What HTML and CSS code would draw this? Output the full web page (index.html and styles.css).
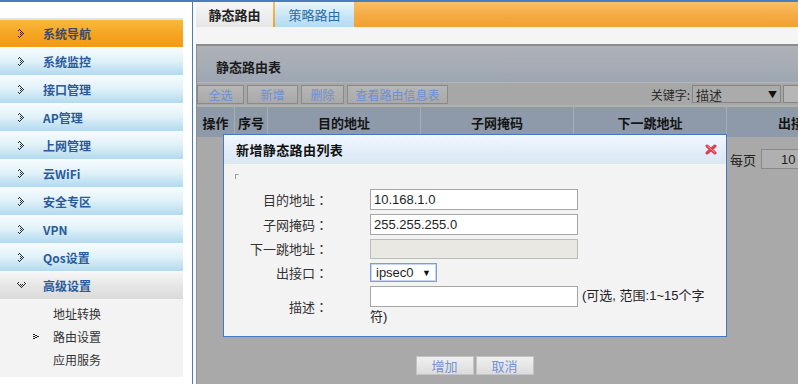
FILE: index.html
```html
<!DOCTYPE html>
<html>
<head>
<meta charset="utf-8">
<link rel="stylesheet" href="styles.css">
</head>
<body>
<svg class="defs" width="0" height="0" aria-hidden="true">
  <defs>
    <g id="chev">
      <rect x="1" y="0" width="1" height="1"/>
      <rect x="0" y="1" width="1" height="1"/><rect x="2" y="1" width="1" height="1"/>
      <rect x="3" y="2" width="1" height="1"/>
      <rect x="2" y="3" width="1" height="1"/><rect x="4" y="3" width="1" height="1"/>
      <rect x="5" y="4" width="1" height="1"/><rect x="3" y="4" width="1" height="1"/>
      <rect x="2" y="5" width="1" height="1"/><rect x="4" y="5" width="1" height="1"/>
      <rect x="3" y="6" width="1" height="1"/>
      <rect x="0" y="7" width="1" height="1"/><rect x="2" y="7" width="1" height="1"/>
      <rect x="1" y="8" width="1" height="1"/>
    </g>
  </defs>
</svg>
<div class="page">
  <aside class="sidebar">
    <ul class="menu">
      <li class="item active"><svg class="ico" width="7" height="9" viewBox="0 0 7 9"><use href="#chev" fill="#3a1c06"/></svg>系统导航</li>
      <li class="item"><svg class="ico" width="7" height="9" viewBox="0 0 7 9"><use href="#chev" fill="#2a2a2a"/></svg>系统监控</li>
      <li class="item"><svg class="ico" width="7" height="9" viewBox="0 0 7 9"><use href="#chev" fill="#2a2a2a"/></svg>接口管理</li>
      <li class="item"><svg class="ico" width="7" height="9" viewBox="0 0 7 9"><use href="#chev" fill="#2a2a2a"/></svg>AP管理</li>
      <li class="item"><svg class="ico" width="7" height="9" viewBox="0 0 7 9"><use href="#chev" fill="#2a2a2a"/></svg>上网管理</li>
      <li class="item"><svg class="ico" width="7" height="9" viewBox="0 0 7 9"><use href="#chev" fill="#2a2a2a"/></svg>云WiFi</li>
      <li class="item"><svg class="ico" width="7" height="9" viewBox="0 0 7 9"><use href="#chev" fill="#2a2a2a"/></svg>安全专区</li>
      <li class="item"><svg class="ico" width="7" height="9" viewBox="0 0 7 9"><use href="#chev" fill="#2a2a2a"/></svg>VPN</li>
      <li class="item"><svg class="ico" width="7" height="9" viewBox="0 0 7 9"><use href="#chev" fill="#2a2a2a"/></svg>Qos设置</li>
      <li class="item open"><svg class="ico down" width="9" height="7" viewBox="0 0 9 7"><g transform="translate(9 0) rotate(90)"><use href="#chev" fill="#2a2a2a"/></g></svg>高级设置</li>
    </ul>
    <ul class="sub">
      <li><span class="mk"></span>地址转换</li>
      <li><span class="mk"><svg width="6" height="5" viewBox="0 0 6 5"><g fill="#222"><rect x="0" y="0" width="2" height="1"/><rect x="2" y="1" width="2" height="1"/><rect x="4" y="2" width="2" height="1"/><rect x="2" y="3" width="2" height="1"/><rect x="0" y="4" width="2" height="1"/><rect x="0" y="2" width="2" height="1"/></g></svg></span>路由设置</li>
      <li><span class="mk"></span>应用服务</li>
    </ul>
  </aside>

  <main class="main">
    <div class="tabs">
      <div class="tab tab-on">静态路由</div>
      <div class="tab tab-off">策略路由</div>
    </div>
    <div class="strip"></div>
    <section class="panel">
      <div class="panel-title">静态路由表</div>
      <div class="toolbar">
        <span class="tbtn w46">全选</span>
        <span class="tbtn w50">新增</span>
        <span class="tbtn w42">删除</span>
        <span class="tbtn w100">查看路由信息表</span>
        <span class="kw">关键字:</span>
        <span class="kwsel">描述<span class="arr">▼</span></span>
        <span class="kwinput"></span>
      </div>
      <div class="thead">
        <div class="th c1">操作</div>
        <div class="th c2">序号</div>
        <div class="th c3">目的地址</div>
        <div class="th c3">子网掩码</div>
        <div class="th c3">下一跳地址</div>
        <div class="th c4">出接</div>
      </div>
      <div class="pager"><span class="ptxt">每页</span><span class="pbox">10</span></div>
    </section>

    <div class="dialog-layer">
      <div class="modal">
        <div class="modal-head">
          <span class="modal-title">新增静态路由列表</span>
          <svg class="close" width="12" height="11" viewBox="0 0 12 11"><g stroke="#e23c4e" stroke-width="3" stroke-linecap="round"><line x1="2" y1="2" x2="10" y2="9"/><line x1="10" y1="2" x2="2" y2="9"/></g><g stroke="#f7a0aa" stroke-width="1"><line x1="2.5" y1="2" x2="9.5" y2="8.2"/></g></svg>
        </div>
        <div class="modal-body">
          <svg class="broken" width="4" height="5" viewBox="0 0 4 5"><path d="M0.5 5V0.5H3.5" fill="none" stroke="#999" stroke-width="1"/></svg>
          <div class="form">
            <div class="lbl">目的地址<span class="colon">：</span></div>
            <div class="val"><span class="inp">10.168.1.0</span></div>
            <div class="lbl">子网掩码<span class="colon">：</span></div>
            <div class="val"><span class="inp">255.255.255.0</span></div>
            <div class="lbl">下一跳地址<span class="colon">：</span></div>
            <div class="val"><span class="inp dis"></span></div>
            <div class="lbl">出接口<span class="colon">：</span></div>
            <div class="val"><span class="sel">ipsec0<span class="arr">▼</span></span></div>
            <div class="lbl">描述<span class="colon">：</span></div>
            <div class="val desc"><span class="inp"></span><span class="hint">(可选, 范围:1~15个字符)</span></div>
          </div>
        </div>
      </div>
      <div class="actions">
        <span class="abtn">增加</span>
        <span class="abtn">取消</span>
      </div>
    </div>
  </main>
</div>
</body>
</html>
```

FILE: styles.css
```css
* { box-sizing: border-box; }
html, body {
  margin: 0;
  padding: 0;
}
body {
  width: 798px;
  height: 384px;
  overflow: hidden;
  font-family: "Liberation Sans", "Noto Sans CJK SC", sans-serif;
  font-size: 12px;
  color: #222;
  background: #fff;
}
.defs { position: absolute; width: 0; height: 0; }
.page {
  display: flex;
  height: 384px;
  border-top: 2px solid #4a7cc0;
}

/* sidebar */
.sidebar {
  flex: none;
  width: 193px;
  border-right: 1px solid #4a7cc0;
  background: #fff;
  padding-top: 16px;
  display: flex;
  flex-direction: column;
}
.menu {
  list-style: none;
  margin: 0;
  padding: 0;
  width: 183px;
  border-top: 2px solid #dbe5ec;
}
.item {
  height: 28px;
  border-bottom: 1px solid #fbfdfe;
  display: flex;
  align-items: center;
  padding-left: 18px;
  background: linear-gradient(#f6fbfd, #e2f2f9 45%, #b2daee);
  color: #2a5a9b;
  font-weight: bold;
  font-size: 12px;
  font-family: "Noto Sans CJK SC", "Liberation Sans", sans-serif;
}
.item .ico { margin-right: 18px; flex: none; }
.item .ico.down { margin-left: -1px; margin-right: 17px; }
.item.active {
  background: linear-gradient(#f8b93c, #f5a524 50%, #f39a14);
  color: #3b4a66;
}
.item.open {
  background: linear-gradient(#f7f7f7, #e6e6e6 50%, #dadada);
  border-bottom: 1px solid #f4f4f4;
}
.sub {
  list-style: none;
  margin: 0;
  padding: 2px 0 0;
  width: 183px;
  height: 77px;
  background: #f3f3f3;
}
.sub li {
  height: 23px;
  display: flex;
  align-items: center;
  padding-left: 33px;
  color: #333;
  font-size: 12px;
  font-family: "Noto Sans CJK SC", sans-serif;
}
.sub .mk {
  width: 20px;
  flex: none;
  display: flex;
  align-items: center;
}

/* main */
.main {
  flex: 1;
  min-width: 0;
  position: relative;
  overflow: hidden;
  padding-left: 3px;
  background: #fafafa;
  display: flex;
  flex-direction: column;
}
.tabs {
  flex: none;
  height: 25px;
  display: flex;
  background: linear-gradient(#f9bf66, #f5ab44 50%, #f2a132);
}
.tab {
  height: 25px;
  display: flex;
  align-items: center;
  justify-content: center;
  font-size: 13px;
  font-family: "Noto Sans CJK SC", sans-serif;
}
.tab-on {
  width: 77px;
  background: linear-gradient(#f6f6f6, #e6e6e6);
  font-weight: bold;
  color: #222;
}
.tab-off {
  width: 79px;
  margin-left: 2px;
  background: linear-gradient(#eaf6fc, #c4e4f4 60%, #b4dcf0);
  color: #2c6ca6;
}
.strip {
  flex: none;
  height: 17px;
  background: #f5f5f5;
}
.panel {
  flex: 1;
  background: #a9a9a9;
  border-left: 1px solid #8e8e8e;
  border-top: 2px solid #8c8c8c;
  display: flex;
  flex-direction: column;
}
.panel-title {
  height: 37px;
  padding-left: 19px;
  display: flex;
  align-items: center;
  padding-top: 5px;
  background: linear-gradient(#aeb2b8, #a7adb5 50%, #9ca6b2);
  font-size: 13px;
  font-weight: bold;
  color: #1c1c1c;
  font-family: "Noto Sans CJK SC", sans-serif;
  border-bottom: 1px solid #b4b6b9;
}
.toolbar {
  height: 24px;
  display: flex;
  align-items: center;
  background: #a7a7a7;
  font-family: "Noto Sans CJK SC", sans-serif;
  border-bottom: 2px solid #b0b0b0;
}
.tbtn {
  height: 19px;
  margin-right: 3px;
  border: 1px solid #8a8a8a;
  background: linear-gradient(#b6b6b6, #a9a9a9);
  color: #6d8fd6;
  font-size: 12px;
  display: flex;
  align-items: center;
  justify-content: center;
}
.w46 { width: 47px; }
.w50 { width: 51px; }
.w42 { width: 43px; }
.w100 { width: 101px; }
.kw {
  margin-left: auto;
  margin-right: 2px;
  color: #2a2a2a;
  font-size: 12px;
}
.kwsel {
  width: 89px;
  height: 18px;
  border: 1px solid #858585;
  background: #ababab;
  color: #2a2a2a;
  font-size: 13px;
  padding-left: 3px;
  display: flex;
  align-items: center;
}
.kwsel .arr {
  margin-left: auto;
  margin-right: 3px;
  font-size: 9px;
  color: #111;
}
.kwinput {
  width: 15px;
  height: 18px;
  margin-left: 2px;
  border: 1px solid #858585;
  border-right: none;
  background: #b6b6b6;
}
.thead {
  display: flex;
  height: 30px;
  background: #8e9aa9;
}
.th {
  flex: none;
  display: flex;
  align-items: center;
  justify-content: center;
  font-size: 13px;
  font-weight: bold;
  color: #141414;
  font-family: "Noto Sans CJK SC", sans-serif;
  border-left: 1px solid #a3adb9;
  white-space: nowrap;
}
.c1 { width: 37px; border-left: none; }
.c2 { width: 33px; }
.c3 { width: 153px; }
.c4 { flex: 1; justify-content: flex-start; padding-left: 51px; }
.pager {
  display: flex;
  align-items: center;
  height: 20px;
  margin-top: 12px;
  padding-left: 533px;
  font-size: 13px;
  color: #222;
  white-space: nowrap;
  font-family: "Noto Sans CJK SC", sans-serif;
}
.ptxt { flex: none; }
.pbox {
  margin-left: 5px;
  width: 60px;
  height: 20px;
  flex: none;
  border: 1px solid #8a8a8a;
  background: #b0b0b0;
  display: flex;
  align-items: center;
  padding-left: 19px;
  font-family: "Liberation Sans", sans-serif;
  font-size: 13px;
}

/* dialog */
.dialog-layer {
  position: absolute;
  left: 30px;
  top: 132px;
  width: 504px;
}
.modal {
  width: 504px;
  height: 203px;
  border: 1px solid #4677c4;
  background: #f3f3f3;
  display: flex;
  flex-direction: column;
}
.modal-head {
  height: 29px;
  flex: none;
  display: flex;
  align-items: center;
  padding-left: 12px;
  padding-right: 9px;
  background: linear-gradient(#f2f7fd, #e4eef9 50%, #dbe7f5);
}
.modal-title {
  font-size: 13px;
  font-weight: bold;
  color: #111;
  letter-spacing: 0.4px;
  font-family: "Noto Sans CJK SC", sans-serif;
}
.close { margin-left: auto; }
.modal-body {
  flex: 1;
  padding: 10px 0 0 11px;
  font-family: "Liberation Sans", "Noto Sans CJK SC", sans-serif;
}
.broken { display: block; }
.form {
  margin-top: 10px;
  margin-left: -11px;
  display: grid;
  grid-template-columns: 104px 345px;
  column-gap: 42px;
  row-gap: 4px;
  align-items: center;
}
.lbl {
  justify-self: end;
  font-size: 13px;
  color: #333;
  font-family: "Noto Sans CJK SC", sans-serif;
  line-height: 18px;
}
.colon { font-family: "Noto Sans CJK TC", sans-serif; }
.val { display: flex; align-items: center; }
.inp {
  display: flex;
  align-items: center;
  width: 208px;
  height: 21px;
  padding-left: 3px;
  border: 1px solid #a6a6a6;
  background: #fff;
  font-size: 13px;
  color: #1e1e1e;
  font-family: "Liberation Sans", sans-serif;
}
.inp.dis {
  height: 20px;
  background: #e9e8e3;
  border-color: #bcbcbc;
}
.sel {
  display: flex;
  align-items: center;
  width: 67px;
  height: 19px;
  padding-left: 5px;
  border: 1px solid #7c9ddb;
  box-shadow: inset 0 0 0 1px #c7d6f2;
  background: #fff;
  font-size: 13px;
  color: #1e1e1e;
}
.sel .arr {
  margin-left: auto;
  margin-right: 5px;
  font-size: 9px;
  color: #111;
}
.val.desc {
  display: block;
  line-height: 20px;
  font-size: 13px;
}
.val.desc .inp {
  display: inline-block;
  vertical-align: top;
}
.hint {
  margin-left: 4px;
  color: #222;
  font-family: "Liberation Sans", "Noto Sans CJK SC", sans-serif;
}
.actions {
  display: flex;
  justify-content: center;
  gap: 2px;
  margin-top: 19px;
  margin-left: -1px;
}
.abtn {
  width: 58px;
  height: 19px;
  display: flex;
  align-items: center;
  justify-content: center;
  border: 1px solid #c3c3c3;
  background: linear-gradient(#f0f0f0, #dcdcdc);
  color: #7393d8;
  font-size: 13px;
  font-family: "Noto Sans CJK SC", sans-serif;
}
```
